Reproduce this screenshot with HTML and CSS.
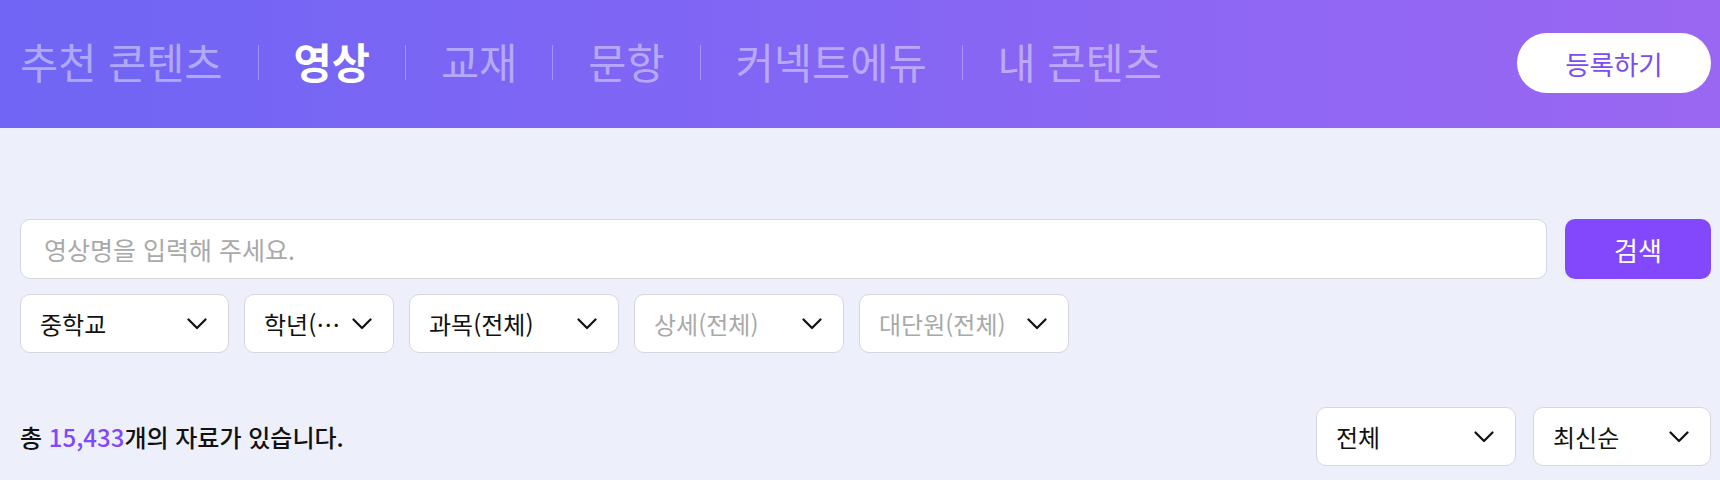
FILE: index.html
```html
<!DOCTYPE html>
<html lang="ko">
<head>
<meta charset="utf-8">
<title>영상</title>
<link rel="stylesheet" href="styles.css">
</head>
<body>
<header class="top">
  <nav class="nav">
    <a class="nav-item">추천 콘텐츠</a>
    <span class="sep"></span>
    <a class="nav-item active">영상</a>
    <span class="sep"></span>
    <a class="nav-item">교재</a>
    <span class="sep"></span>
    <a class="nav-item">문항</a>
    <span class="sep"></span>
    <a class="nav-item">커넥트에듀</a>
    <span class="sep"></span>
    <a class="nav-item">내 콘텐츠</a>
  </nav>
  <button class="register">등록하기</button>
</header>
<main class="main">
  <div class="search-row">
    <input class="search-input" type="text" placeholder="영상명을 입력해 주세요.">
    <button class="search-btn">검색</button>
  </div>
  <div class="filter-row">
    <div class="select w209"><span class="label">중학교</span><svg class="chev" width="20" height="12" viewBox="0 0 20 12"><polyline points="1.5,1.5 10,10 18.5,1.5"/></svg></div>
    <div class="select w150"><span class="label">학년(…</span><svg class="chev" width="20" height="12" viewBox="0 0 20 12"><polyline points="1.5,1.5 10,10 18.5,1.5"/></svg></div>
    <div class="select w210"><span class="label">과목(전체)</span><svg class="chev" width="20" height="12" viewBox="0 0 20 12"><polyline points="1.5,1.5 10,10 18.5,1.5"/></svg></div>
    <div class="select w210 disabled"><span class="label">상세(전체)</span><svg class="chev" width="20" height="12" viewBox="0 0 20 12"><polyline points="1.5,1.5 10,10 18.5,1.5"/></svg></div>
    <div class="select w210 disabled"><span class="label">대단원(전체)</span><svg class="chev" width="20" height="12" viewBox="0 0 20 12"><polyline points="1.5,1.5 10,10 18.5,1.5"/></svg></div>
  </div>
  <div class="result-row">
    <p class="count">총 <span class="num">15,433</span>개의 자료가 있습니다.</p>
    <div class="sorts">
      <div class="select w200"><span class="label">전체</span><svg class="chev" width="20" height="12" viewBox="0 0 20 12"><polyline points="1.5,1.5 10,10 18.5,1.5"/></svg></div>
      <div class="select w178"><span class="label">최신순</span><svg class="chev" width="20" height="12" viewBox="0 0 20 12"><polyline points="1.5,1.5 10,10 18.5,1.5"/></svg></div>
    </div>
  </div>
</main>
</body>
</html>
```

FILE: styles.css
```css
* { box-sizing: border-box; }
html, body {
  margin: 0;
  padding: 0;
}
body {
  background: #edf0fb;
  font-family: "Noto Sans CJK KR", "Noto Sans", sans-serif;
  color: #111;
  overflow: hidden;
}
.top {
  height: 128px;
  display: flex;
  align-items: center;
  justify-content: space-between;
  padding: 0 9px 0 20px;
  background: linear-gradient(90deg, #7065f4 0%, #8466f4 50%, #9a67f2 100%);
}
.nav {
  display: flex;
  align-items: center;
  margin-top: -4px;
}
.nav-item {
  font-size: 41.5px;
  line-height: 1;
  color: rgba(255, 255, 255, 0.45);
  white-space: nowrap;
}
.nav-item.active {
  color: #fff;
  font-weight: 700;
}
.sep {
  width: 1px;
  height: 35px;
  background: rgba(255, 255, 255, 0.3);
  margin: 0 35px;
}
.register {
  width: 194px;
  height: 60px;
  margin-top: -2px;
  border: none;
  border-radius: 30px;
  background: #fff;
  color: #7a4cf2;
  font-family: inherit;
  font-size: 26.5px;
  padding: 0;
}
.main {
  padding: 91px 9px 0 20px;
}
.search-row {
  display: flex;
  gap: 18px;
}
.search-input {
  flex: 1;
  height: 60px;
  border: 1px solid #d6d7dc;
  border-radius: 10px;
  background: #fff;
  padding: 0 0 0 23px;
  font-family: inherit;
  font-size: 25px;
  color: #111;
  outline: none;
}
.search-input::placeholder {
  color: #a9a9a9;
}
.search-btn {
  width: 146px;
  height: 60px;
  border: none;
  border-radius: 10px;
  background: #8347fc;
  color: #fff;
  font-family: inherit;
  font-size: 26px;
  padding: 0;
}
.filter-row {
  display: flex;
  gap: 15px;
  margin-top: 15px;
}
.select {
  height: 59px;
  background: #fff;
  border: 1px solid #d6d7dc;
  border-radius: 10px;
  display: flex;
  align-items: center;
  justify-content: space-between;
  padding: 0 21px 0 19px;
  gap: 8px;
}
.select .label {
  font-size: 24px;
  color: #111;
  white-space: nowrap;
  min-width: 0;
}
.select.disabled .label {
  color: #a9a9a9;
}
.chev {
  flex: none;
  fill: none;
  stroke: #111;
  stroke-width: 2.2;
  stroke-linecap: round;
  stroke-linejoin: round;
}
.w209 { width: 209px; }
.w150 { width: 150px; }
.w210 { width: 210px; }
.w200 { width: 200px; }
.w178 { width: 178px; }
.result-row {
  display: flex;
  align-items: center;
  justify-content: space-between;
  margin-top: 54px;
}
.count {
  margin: 0;
  font-size: 24px;
  font-weight: 500;
  color: #111;
}
.num {
  color: #8347fc;
}
.sorts {
  display: flex;
  gap: 17px;
}
```
